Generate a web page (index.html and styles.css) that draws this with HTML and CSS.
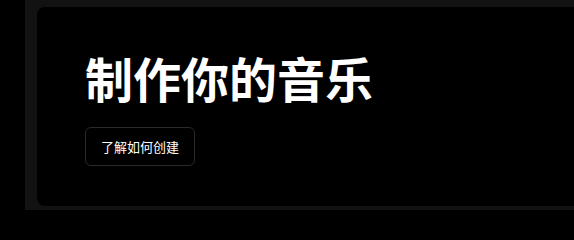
FILE: index.html
```html
<!DOCTYPE html>
<html lang="zh-CN">
<head>
<meta charset="utf-8">
<link rel="stylesheet" href="styles.css">
</head>
<body>
<div class="app">
  <div class="rail"></div>
  <main class="panel">
    <section class="card">
      <h1 class="title">制作你的音乐</h1>
      <button class="btn">了解如何创建</button>
    </section>
  </main>
</div>
</body>
</html>
```
FILE: styles.css
```css
html, body {
  margin: 0;
  padding: 0;
  background: #000;
  height: 100%;
  overflow: hidden;
}
.app {
  display: flex;
  height: 210px;
  font-family: "Noto Sans CJK SC", "Noto Sans", sans-serif;
}
.rail {
  width: 25px;
  flex: none;
  background: #000;
}
.panel {
  flex: 1;
  background: #121212;
  padding: 7px 0 4px 12px;
  display: flex;
  min-width: 0;
}
.card {
  flex: 1;
  background: #000;
  border-radius: 8px 0 0 8px;
  margin-right: -20px;
  padding: 38px 48px 0 48px;
}
.title {
  margin: 0 0 18px 0;
  color: #fff;
  font-size: 48px;
  font-weight: 700;
  line-height: 64px;
  letter-spacing: 0;
}
.btn {
  font-family: inherit;
  font-size: 13px;
  color: #fff;
  background: #000;
  border: 1px solid #2a2a2a;
  border-radius: 6px;
  height: 39px;
  padding: 0 15px;
  cursor: pointer;
}
```
